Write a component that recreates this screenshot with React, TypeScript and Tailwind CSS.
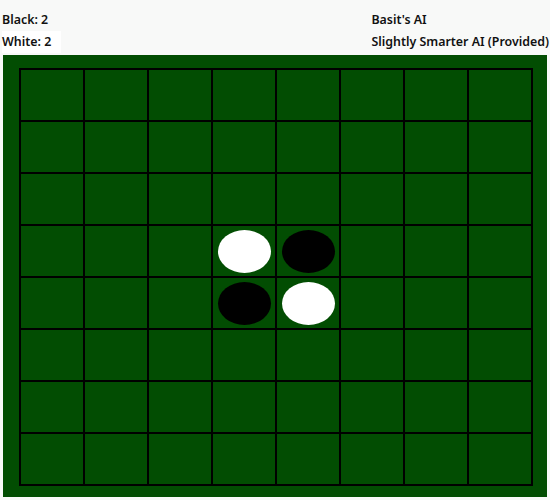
import React from "react";

const initial: Record<string, "b" | "w"> = {
  "3-3": "w",
  "3-4": "b",
  "4-3": "b",
  "4-4": "w",
};

export default function App() {
  const rows = Array.from({ length: 8 }, (_, r) => r);
  const cols = Array.from({ length: 8 }, (_, c) => c);
  return (
    <div
      className="w-[550px] h-[500px] bg-[#f8f9f8] overflow-hidden"
      style={{ fontFamily: '"Noto Sans", "Open Sans", sans-serif' }}
    >
      <div className="flex justify-between h-[55px] text-[12.4px] font-semibold text-[#111111] leading-[22px] pt-[9px]">
        <div className="pl-[2px] flex flex-col">
          <span>Black: 2</span>
          <span className="bg-white pr-[10px] self-start">White: 2</span>
        </div>
        <div className="flex flex-col pr-[1px]">
          <span className="whitespace-nowrap">Basit's AI</span>
          <span className="whitespace-nowrap">Slightly Smarter AI (Provided)</span>
        </div>
      </div>
      <div className="ml-[3px] w-[544px] h-[442px] bg-[#024d02] pt-[13px] pl-[16px]">
        <div className="border-l-2 border-t-2 border-black w-[514px] flex flex-col">
          {rows.map((r) => (
            <div key={r} className="flex">
              {cols.map((c) => {
                const p = initial[`${r}-${c}`];
                return (
                  <div
                    key={c}
                    className="w-[64px] h-[52px] border-r-2 border-b-2 border-black flex items-center justify-center"
                  >
                    {p === "w" && (
                      <div className="w-[53px] h-[43px] rounded-[50%] bg-white" />
                    )}
                    {p === "b" && (
                      <div className="w-[53px] h-[43px] rounded-[50%] bg-black" />
                    )}
                  </div>
                );
              })}
            </div>
          ))}
        </div>
      </div>
    </div>
  );
}
